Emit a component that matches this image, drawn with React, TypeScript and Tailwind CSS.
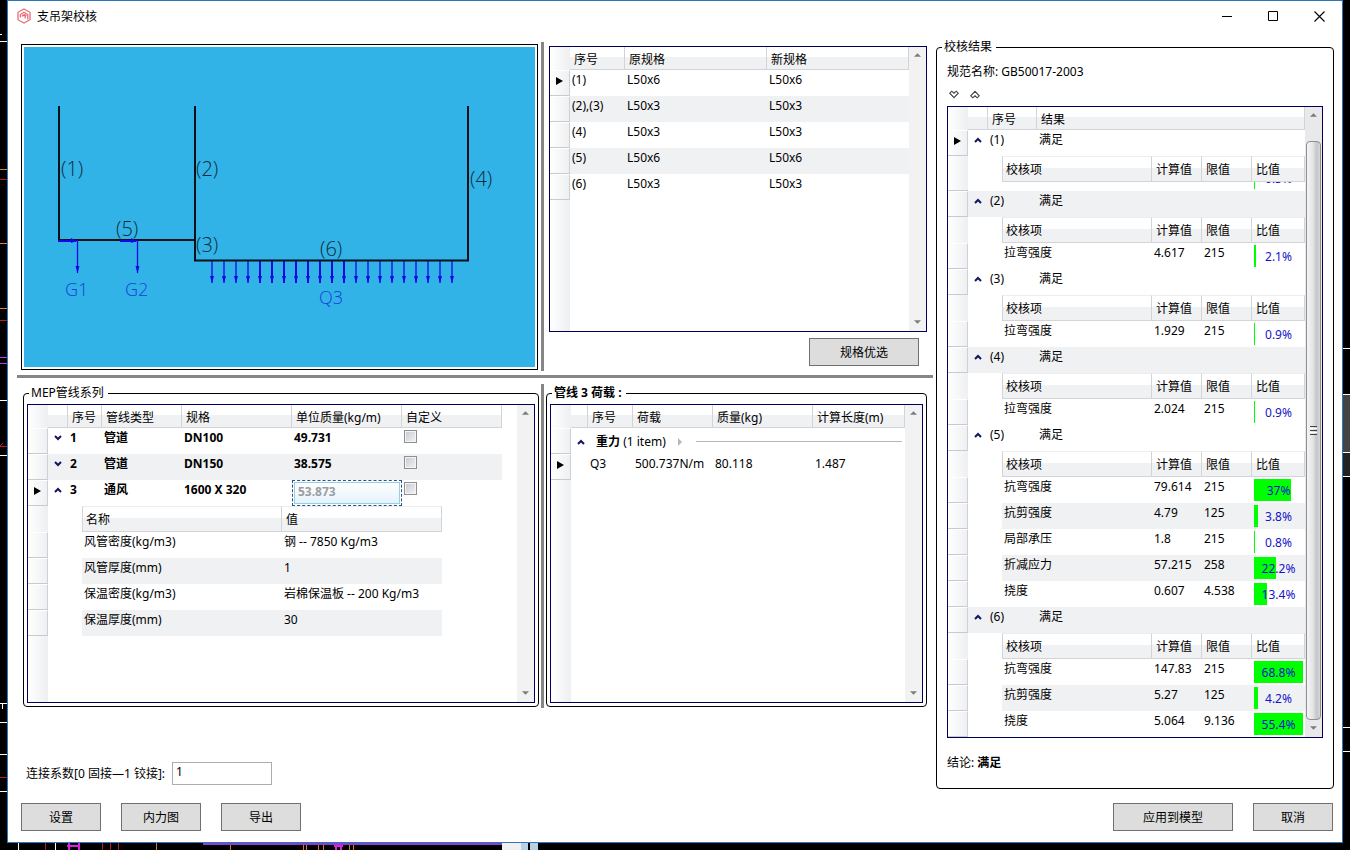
import { Fragment, type ReactNode } from 'react'
import clsx from 'clsx'

interface CheckItem {
  name: string
  value: string
  limit: string
  ratio: number
  clipped?: boolean
}

interface CheckGroup {
  id: string
  result: string
  items: CheckItem[]
}

const specs = [
  { id: '(1)', from: 'L50x6', to: 'L50x6' },
  { id: '(2),(3)', from: 'L50x3', to: 'L50x3' },
  { id: '(4)', from: 'L50x3', to: 'L50x3' },
  { id: '(5)', from: 'L50x6', to: 'L50x6' },
  { id: '(6)', from: 'L50x3', to: 'L50x3' }
]

const pipes = [
  { id: '1', type: '管道', spec: 'DN100', mass: '49.731' },
  { id: '2', type: '管道', spec: 'DN150', mass: '38.575' },
  { id: '3', type: '通风', spec: '1600 X 320', mass: '53.873', open: true }
]

const ductProps = [
  ['风管密度(kg/m3)', '钢 -- 7850 Kg/m3'],
  ['风管厚度(mm)', '1'],
  ['保温密度(kg/m3)', '岩棉保温板 -- 200 Kg/m3'],
  ['保温厚度(mm)', '30']
]

const groups: CheckGroup[] = [
  { id: '(1)', result: '满足', items: [{ name: '', value: '', limit: '', ratio: 0.3, clipped: true }] },
  { id: '(2)', result: '满足', items: [{ name: '拉弯强度', value: '4.617', limit: '215', ratio: 2.1 }] },
  { id: '(3)', result: '满足', items: [{ name: '拉弯强度', value: '1.929', limit: '215', ratio: 0.9 }] },
  { id: '(4)', result: '满足', items: [{ name: '拉弯强度', value: '2.024', limit: '215', ratio: 0.9 }] },
  {
    id: '(5)',
    result: '满足',
    items: [
      { name: '抗弯强度', value: '79.614', limit: '215', ratio: 37 },
      { name: '抗剪强度', value: '4.79', limit: '125', ratio: 3.8 },
      { name: '局部承压', value: '1.8', limit: '215', ratio: 0.8 },
      { name: '折减应力', value: '57.215', limit: '258', ratio: 22.2 },
      { name: '挠度', value: '0.607', limit: '4.538', ratio: 13.4 }
    ]
  },
  {
    id: '(6)',
    result: '满足',
    items: [
      { name: '抗弯强度', value: '147.83', limit: '215', ratio: 68.8 },
      { name: '抗剪强度', value: '5.27', limit: '125', ratio: 4.2 },
      { name: '挠度', value: '5.064', limit: '9.136', ratio: 55.4 }
    ]
  }
]

function Chevron({ up = false }: { up?: boolean }) {
  return (
    <button type="button" aria-label={up ? '收起' : '展开'} className="flex h-5 w-full items-center justify-center">
      <svg width="8" height="6" viewBox="0 0 8 6" fill="none" stroke="#14145f" strokeWidth="2">
        <path d={up ? 'M1 5 4 2 7 5' : 'M1 1 4 4 7 1'} />
      </svg>
    </button>
  )
}

function ScrollArrow({ up = false }: { up?: boolean }) {
  return (
    <button type="button" aria-label={up ? '向上滚动' : '向下滚动'} className="flex h-[17px] w-full items-center justify-center pb-[2px]">
      <svg width="7" height="4" viewBox="0 0 8 4" fill="#7c7c7c">
        <path d={up ? 'M0 4 4 0 8 4z' : 'M0 0 4 4 8 0z'} />
      </svg>
    </button>
  )
}

function ScrollBar({ thumb = false }: { thumb?: boolean }) {
  return (
    <div className={clsx('flex w-[17px] shrink-0 flex-col', thumb ? 'bg-[#e9e9ec]' : 'bg-[#f2f2f3]')}>
      <ScrollArrow up />
      {thumb ? (
        <div className="mx-px mt-[17px] flex flex-1 flex-col items-center justify-center gap-px rounded-sm border border-[#8e8f94] bg-[linear-gradient(to_right,#f5f5f5,#e4e4e6_45%,#c4c5c9_75%,#d8d8da)]">
          <span className="h-px w-[7px] bg-[#444]" />
          <span className="h-px w-[7px] bg-white" />
          <span className="h-px w-[7px] bg-[#444]" />
          <span className="h-px w-[7px] bg-white" />
          <span className="h-px w-[7px] bg-[#444]" />
        </div>
      ) : (
        <div className="flex-1" />
      )}
      <ScrollArrow />
    </div>
  )
}

function DataGrid({ children, className, thumb }: { children: ReactNode; className?: string; thumb?: boolean }) {
  return (
    <div className={clsx('flex border border-[#00005c] bg-white', className)}>
      <div className="min-w-0 flex-1 bg-[linear-gradient(to_right,#ffffff,#eeeff1)] bg-[length:20px_100%] bg-no-repeat">
        {children}
      </div>
      <ScrollBar thumb={thumb} />
    </div>
  )
}

function Th({ children, nested }: { children?: ReactNode; nested?: boolean }) {
  return (
    <th
      className={clsx(
        'truncate border-r border-b border-[#d3d4d8] bg-[linear-gradient(#ffffff_44%,#f0f1f3_44%)] text-left font-normal',
        nested ? 'h-[26px] border-t border-t-[#ededf0] pt-px pl-1 first:border-l first:pl-[3px]' : 'h-[23px] pt-[3px] pl-1'
      )}
    >
      {children}
    </th>
  )
}

function Td({ children, className }: { children?: ReactNode; className?: string }) {
  return <td className={clsx('h-[26px] pt-[2px] pl-[2px] align-top whitespace-nowrap', className)}>{children}</td>
}

function RowHead({ current = false }: { current?: boolean }) {
  return (
    <div className="flex h-[26px] items-center justify-center border-t border-r border-b border-t-white border-r-[#cfd0d4] border-b-[#c9cace] pb-1">
      {current && (
        <svg width="7" height="8" viewBox="0 0 7 8">
          <path d="M0 0 7 4 0 8z" />
        </svg>
      )}
    </div>
  )
}

function RatioBar({ item }: { item: CheckItem }) {
  return (
    <div className="flex h-[26px] shrink-0 items-center">
      <div className="grid h-[22px] flex-1 grid-cols-1 items-center overflow-hidden">
        <span className="h-full max-w-full bg-[#00ff00] [grid-area:1/1]" style={{ width: Math.max(1, Math.round(item.ratio)) }} />
        <span className="pt-[2px] text-center text-[#1414c8] [grid-area:1/1]">{item.ratio}%</span>
      </div>
    </div>
  )
}

interface GroupBoxProps {
  title: string
  children: ReactNode
  className?: string
  bodyClass?: string
  bold?: boolean
}

function GroupBox({ title, children, className, bodyClass, bold }: GroupBoxProps) {
  return (
    <fieldset className={clsx('min-w-0 rounded-[4px] border border-black', className)}>
      <legend className={clsx('ml-[5px] h-4 pr-1 pl-[2px]', bold && 'font-bold')}>{title}</legend>
      <div className={bodyClass}>{children}</div>
    </fieldset>
  )
}

function Button({ children, className }: { children: ReactNode; className: string }) {
  return (
    <button type="button" className={clsx('h-7 border border-[#707070] bg-[#dddddd] pt-px hover:bg-[#bee6fd]', className)}>
      {children}
    </button>
  )
}

function Backdrop() {
  return (
    <svg className="absolute inset-0 h-full w-full" viewBox="0 0 1350 850" preserveAspectRatio="none" shapeRendering="crispEdges">
      <path d="M0 41.5h7M0 400.5h7M0 455.5h7M0 703.5h7M0 722.5h7M0 754.5h7M0 791.5h7M2.5 703v6M0 34.5h2" stroke="#fff" />
      <path d="M0 169.5h7M0 243.5h7M0 308.5h7" stroke="#e08020" />
      <path d="M0 179.5h7M0 446.5h7M0 777.5h7M0 320.5h7M0 446l3-3" stroke="#c01818" />
      <path d="M0 357.5h7M0 363.5h7" stroke="#b040e0" />
      <path d="M1343 395h7v57h-7z" fill="#444" />
      <path d="M1343 453h7v24h-7z" fill="#222" />
      <path d="M1343 394.5h7M1343 452.5h7M1343 476.5h7M1343 727.5h7M1343 751.5h7M1343 348.5h7" stroke="#fff" />
      <path d="M18.5 843v7M55.5 843v7" stroke="#fff" />
      <path d="M45.5 843v7M102.5 843v7M110.5 843v7M118.5 843v7" stroke="#c01818" />
      <path d="M156.5 843v7M230.5 843v7M303.5 843v7M306.5 843v7M318.5 843v7M323.5 843v7M349.5 843v7M353.5 843v7" stroke="#d87a28" />
      <path d="M67 846h13M68.5 843v7M78.5 843v7M334 846h9M335.5 843v7M340.5 843v7" stroke="#e020e0" strokeWidth="2" />
      <path d="M203 844h299" stroke="#8a3fd0" strokeWidth="2" />
      <path d="M502 843h19v7h-19z" fill="#f0f0f0" />
      <path d="M521 843h7v7h-7zM530 843h8v7h-8z" fill="#b8d0e4" />
    </svg>
  )
}

function TitleBar() {
  return (
    <header className="flex h-[30px] items-center">
      <svg className="ml-[9px]" width="14" height="16" viewBox="0 0 14 16" fill="none" stroke="#e8707a" strokeWidth="1.3">
        <path d="M7 1 13 4.3v7.4L7 15 1 11.700V4.300z" />
        <path d="M3.300 9.500V6.500L7 4.300l3.800 2.200v5M5 8.500c.5-2.200 3.500-2.500 4.300-.5M6 7.500h2.200v3" />
      </svg>
      <h1 className="ml-[6px] flex-1 pt-px">支吊架校核</h1>
      <button type="button" aria-label="最小化" className="flex h-[29px] w-[46px] items-center justify-center">
        <svg width="10" height="10" stroke="#000">
          <path d="M0 5.500h10" />
        </svg>
      </button>
      <button type="button" aria-label="最大化" className="flex h-[29px] w-[46px] items-center justify-center">
        <svg width="11" height="11" fill="none" stroke="#000">
          <path d="M.5.5h9v9h-9z" />
        </svg>
      </button>
      <button type="button" aria-label="关闭" className="flex h-[29px] w-[46px] items-center justify-center">
        <svg width="11" height="11" stroke="#000" strokeWidth="1.1">
          <path d="M.5.5l10 10M10.500.5l-10 10" />
        </svg>
      </button>
    </header>
  )
}

function DownArrow({ x, top, tip, bold }: { x: number; top: number; tip: number; bold?: boolean }) {
  return (
    <g stroke="#1408e6" fill="#1408e6">
      <path d={`M${x} ${top}V${tip}`} strokeWidth={bold ? 2 : 1.3} />
      <path d={`M${x - 2} ${tip - 7}h4l-2 7z`} stroke="none" />
    </g>
  )
}

function FrameDiagram() {
  const labels: [string, number, number][] = [
    ['(1)', 61, 176],
    ['(2)', 196, 176],
    ['(3)', 196, 252],
    ['(4)', 470, 186],
    ['(5)', 116, 236],
    ['(6)', 320, 256]
  ]
  return (
    <svg
      viewBox="24 47 511 320"
      preserveAspectRatio="none"
      className="h-full w-full bg-[#32b3e7] font-['Open_Sans','Noto_Sans',sans-serif] text-[20px] font-light"
    >
      <path d="M59 106V240H195M195 106V260.500H468V106" fill="none" stroke="#0b1116" strokeWidth="2" />
      {labels.map(([text, x, y]) => (
        <text key={text} x={x} y={y} fill="#0d2b3a">
          {text}
        </text>
      ))}
      <path d="M58 241h18M120 241h16" stroke="#1408e6" strokeWidth="2" />
      <path d="M71 238l6 3-6 2zM131 238l6 3-6 2z" fill="#1408e6" />
      <DownArrow x={77.5} top={240} tip={273} />
      <DownArrow x={137.5} top={240} tip={273} />
      {Array.from({ length: 21 }, (_, i) => (
        <DownArrow key={i} x={212 + i * 12} top={261} tip={283} bold={i > 3 && i < 12} />
      ))}
      <g fill="#1540dc" className="text-[18px]">
        <text x="65" y="296">G1</text>
        <text x="125" y="296">G2</text>
        <text x="319" y="304">Q3</text>
      </g>
    </svg>
  )
}

function SpecTable() {
  return (
    <DataGrid className="h-[286px]">
      <table className="w-full table-fixed border-separate border-spacing-0">
        <colgroup>
          <col className="w-5" />
          <col className="w-[55px]" />
          <col />
          <col />
        </colgroup>
        <thead>
          <tr>
            <th />
            <Th>序号</Th>
            <Th>原规格</Th>
            <Th>新规格</Th>
          </tr>
        </thead>
        <tbody>
          {specs.map((row, index) => (
            <tr key={row.id}>
              <td>
                <RowHead current={index === 0} />
              </td>
              <Td className={index % 2 ? 'bg-[#f0f1f3]' : 'bg-white'}>{row.id}</Td>
              <Td className={index % 2 ? 'bg-[#f0f1f3]' : 'bg-white'}>{row.from}</Td>
              <Td className={index % 2 ? 'bg-[#f0f1f3]' : 'bg-white'}>{row.to}</Td>
            </tr>
          ))}
        </tbody>
      </table>
    </DataGrid>
  )
}

function PipeTable() {
  return (
    <DataGrid className="h-[299px]">
      <table className="w-full table-fixed border-separate border-spacing-0">
        <colgroup>
          <col className="w-5" />
          <col className="w-5" />
          <col className="w-[34px]" />
          <col className="w-20" />
          <col className="w-[110px]" />
          <col className="w-[110px]" />
          <col className="w-[100px]" />
          <col />
        </colgroup>
        <thead>
          <tr>
            <th />
            <Th />
            <Th>序号</Th>
            <Th>管线类型</Th>
            <Th>规格</Th>
            <Th>单位质量(kg/m)</Th>
            <Th>自定义</Th>
            <th />
          </tr>
        </thead>
        <tbody>
          {pipes.map((pipe, index) => (
            <Fragment key={pipe.id}>
              <tr className={clsx('font-bold', index % 2 && '[&>td:not(:first-child):not(:last-child)]:bg-[#f0f1f3]')}>
                <td>
                  <RowHead current={pipe.open} />
                </td>
                <td className="align-top">
                  <Chevron up={pipe.open} />
                </td>
                <Td>{pipe.id}</Td>
                <Td>{pipe.type}</Td>
                <Td>{pipe.spec}</Td>
                {pipe.open ? (
                  <td className="h-[26px]">
                    <div className="h-[26px] border border-dashed border-[#1c5a8c] p-px">
                      <input
                        type="text"
                        aria-label="单位质量"
                        defaultValue={pipe.mass}
                        disabled
                        className="block h-[22px] w-full border border-[#9ccbe2] bg-linear-to-b from-white to-[#e4f3fb] pb-[4px] pl-[3px] font-bold text-[#9a9ea2]"
                      />
                    </div>
                  </td>
                ) : (
                  <Td>{pipe.mass}</Td>
                )}
                <Td>
                  <input
                    type="checkbox"
                    aria-label={`自定义 ${pipe.id}`}
                    className="block size-[13px] appearance-none border border-[#8e8f8f] bg-[linear-gradient(135deg,#c4c8d0,#f4f4f4)] shadow-[inset_0_0_0_1px_#f4f4f4] checked:bg-[#5b87b8]"
                  />
                </Td>
                <td />
              </tr>
              {pipe.open && (
                <tr>
                  <td className="align-top">
                    <div className="h-[26px]" />
                    {ductProps.map(([name]) => (
                      <RowHead key={name} />
                    ))}
                  </td>
                  <td colSpan={7} className="pl-[34px] align-top">
                    <table className="w-[360px] table-fixed border-separate border-spacing-0">
                      <colgroup>
                        <col className="w-[200px]" />
                        <col />
                      </colgroup>
                      <thead>
                        <tr>
                          <Th nested>名称</Th>
                          <Th nested>值</Th>
                        </tr>
                      </thead>
                      <tbody>
                        {ductProps.map(([name, value]) => (
                          <tr key={name} className="even:bg-[#f0f1f3]">
                            <Td>{name}</Td>
                            <Td>{value}</Td>
                          </tr>
                        ))}
                      </tbody>
                    </table>
                  </td>
                </tr>
              )}
            </Fragment>
          ))}
        </tbody>
      </table>
    </DataGrid>
  )
}

function LoadTable() {
  return (
    <DataGrid className="h-[299px]">
      <table className="w-full table-fixed border-separate border-spacing-0">
        <colgroup>
          <col className="w-5" />
          <col className="w-[17px]" />
          <col className="w-[45px]" />
          <col className="w-20" />
          <col className="w-[100px]" />
          <col />
        </colgroup>
        <thead>
          <tr>
            <th />
            <Th />
            <Th>序号</Th>
            <Th>荷载</Th>
            <Th>质量(kg)</Th>
            <Th>计算长度(m)</Th>
          </tr>
        </thead>
        <tbody>
          <tr>
            <td>
              <RowHead />
            </td>
            <td colSpan={5}>
              <div className="flex items-center pt-px pr-[3px]">
                <span className="w-5">
                  <Chevron up />
                </span>
                <span className="ml-[5px] whitespace-nowrap">
                  <b>重力</b> (1 item)
                </span>
                <svg className="ml-3 shrink-0" width="4" height="8" fill="#b4b6ba">
                  <path d="M0 0 4 4 0 8z" />
                </svg>
                <span className="ml-[14px] h-px flex-1 bg-[#b4b6ba]" />
              </div>
            </td>
          </tr>
          <tr>
            <td>
              <RowHead current />
            </td>
            <td />
            <Td>Q3</Td>
            <Td>500.737N/m</Td>
            <Td>80.118</Td>
            <Td>1.487</Td>
          </tr>
        </tbody>
      </table>
    </DataGrid>
  )
}

function ResultTable() {
  return (
    <DataGrid thumb>
      <table className="w-full table-fixed border-separate border-spacing-0">
        <colgroup>
          <col className="w-5" />
          <col className="w-5" />
          <col className="w-[49px]" />
          <col />
        </colgroup>
        <thead>
          <tr>
            <th />
            <Th />
            <Th>序号</Th>
            <Th>结果</Th>
          </tr>
        </thead>
        <tbody>
          {groups.map((group, index) => (
            <Fragment key={group.id}>
              <tr className={clsx(index % 2 && '[&>td:not(:first-child)]:bg-[#f0f1f3]')}>
                <td>
                  <RowHead current={index === 0} />
                </td>
                <td className="align-top">
                  <Chevron up />
                </td>
                <Td>{group.id}</Td>
                <Td>{group.result}</Td>
              </tr>
              <tr>
                <td className="align-top">
                  <div className="h-[26px]" />
                  {group.items.map((item, i) =>
                    item.clipped ? <div key={i} className="h-[9px] border-b border-[#c9cace]" /> : <RowHead key={i} />
                  )}
                </td>
                <td colSpan={3} className="pl-[34px] align-top">
                  <table className="w-full table-fixed border-separate border-spacing-0">
                    <colgroup>
                      <col />
                      <col className="w-[50px]" />
                      <col className="w-[50px]" />
                      <col className="w-[53px]" />
                    </colgroup>
                    <thead>
                      <tr>
                        <Th nested>校核项</Th>
                        <Th nested>计算值</Th>
                        <Th nested>限值</Th>
                        <Th nested>比值</Th>
                      </tr>
                    </thead>
                    <tbody>
                      {group.items.map((item, i) =>
                        item.clipped ? (
                          <tr key={i}>
                            <td colSpan={3} />
                            <td className="px-[2px]">
                              <div className="flex h-[9px] flex-col justify-end overflow-hidden">
                                <RatioBar item={item} />
                              </div>
                            </td>
                          </tr>
                        ) : (
                          <tr key={i} className="even:bg-[#f0f1f3]">
                            <Td>{item.name}</Td>
                            <Td>{item.value}</Td>
                            <Td>{item.limit}</Td>
                            <td className="px-[2px]">
                              <RatioBar item={item} />
                            </td>
                          </tr>
                        )
                      )}
                    </tbody>
                  </table>
                </td>
              </tr>
            </Fragment>
          ))}
        </tbody>
      </table>
    </DataGrid>
  )
}

export default function App() {
  return (
    <div className="relative flex min-h-screen bg-black px-[7px] pb-[7px] font-['Noto_Sans','Noto_Sans_CJK_SC',sans-serif] text-[12px] leading-4 text-black">
      <Backdrop />
      <div className="relative flex min-w-0 flex-1 flex-col border border-[#2a77bd] bg-white">
        <TitleBar />

        <main className="flex flex-1 gap-[3px] pr-2 pl-[9px]">
          <div className="flex min-w-0 flex-1 flex-col pt-[11px]">
            {/* Diagram and member specs */}
            <div className="grid h-[329px] grid-cols-[minmax(0,524fr)_3px_minmax(0,389fr)]">
              <div className="mt-[2px] mr-[3px] mb-px ml-1 border border-black p-[2px]">
                <FrameDiagram />
              </div>
              <div className="bg-[#868686]" />
              <div className="flex flex-col pt-1 pr-[6px] pl-[5px]">
                <SpecTable />
                <Button className="mt-[6px] mr-2 w-[110px] self-end">规格优选</Button>
              </div>
            </div>

            <div className="mt-1 h-[3px] bg-[#868686]" />

            {/* Pipes and loads */}
            <div className="mt-[6px] grid h-[324px] grid-cols-[minmax(0,524fr)_3px_minmax(0,389fr)]">
              <GroupBox title="MEP管线系列" className="mt-px mr-[2px] mb-px ml-[6px]" bodyClass="p-[3px]">
                <PipeTable />
              </GroupBox>
              <div className="bg-[#868686]" />
              <GroupBox title="管线 3 荷载 :" bold className="mt-px mr-[6px] mb-px ml-[2px]" bodyClass="p-[3px]">
                <LoadTable />
              </GroupBox>
            </div>

            <div className="mt-auto flex items-center gap-1 pb-1 pl-[9px]">
              <label htmlFor="factor" className="min-w-[142px]">
                连接系数[0 固接—1 铰接]:
              </label>
              <input
                id="factor"
                type="text"
                defaultValue="1"
                className="h-[23px] w-[100px] border border-[#abadb3] pb-[5px] pl-[3px] focus:outline-none"
              />
            </div>
          </div>

          <GroupBox title="校核结果" className="mt-2 w-[398px] shrink-0" bodyClass="px-[10px] pt-2 pb-[18px]">
            <p className="h-4 pt-px">规范名称: GB50017-2003</p>
            <div className="flex h-[27px] items-center gap-[11px] pt-[3px] pl-[2px]">
              <button type="button" aria-label="全部展开">
                <svg width="10" height="9" viewBox="0 0 9 8" fill="none" stroke="#444">
                  <path d="M.7 2.800 2.500 1l2 1.800L6.500 1l1.800 1.800-3.800 4z" />
                </svg>
              </button>
              <button type="button" aria-label="全部收起">
                <svg width="10" height="9" viewBox="0 0 9 8" fill="none" stroke="#444">
                  <path d="M.7 5.200 2.500 7l2-1.800L6.500 7l1.800-1.800-3.800-4z" />
                </svg>
              </button>
            </div>
            <ResultTable />
            <p className="h-8 pt-[17px]">
              结论: <b>满足</b>
            </p>
          </GroupBox>
        </main>

        <footer className="flex gap-5 pt-[14px] pr-[9px] pb-[11px] pl-[13px]">
          <Button className="w-20">设置</Button>
          <Button className="w-20">内力图</Button>
          <Button className="w-20">导出</Button>
          <Button className="ml-auto w-[120px]">应用到模型</Button>
          <Button className="w-20">取消</Button>
        </footer>
      </div>
    </div>
  )
}
